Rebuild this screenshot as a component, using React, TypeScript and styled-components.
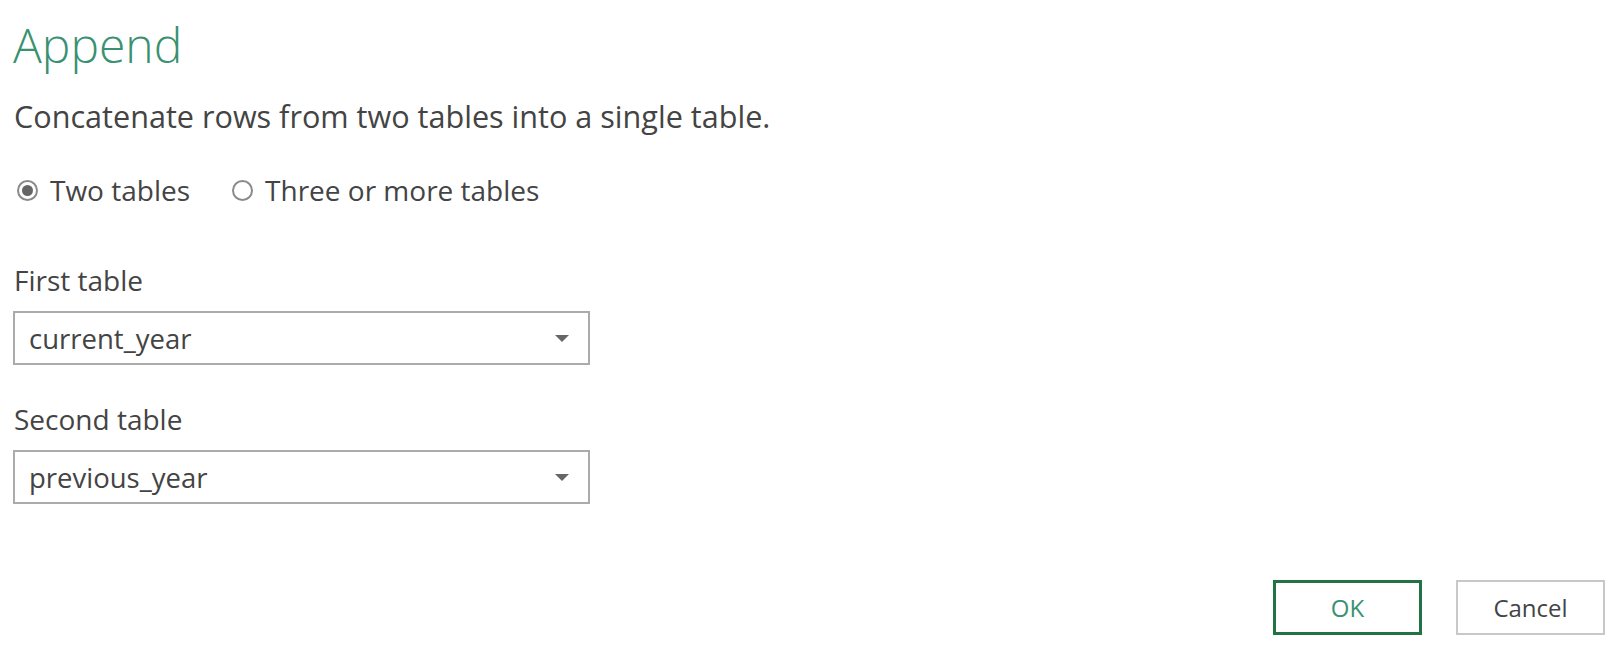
import React from "react";
import styled, { createGlobalStyle } from "styled-components";

const GlobalStyle = createGlobalStyle`
  body {
    margin: 0;
    background: #fff;
    font-family: "Open Sans", "Noto Sans", sans-serif;
    color: #444;
  }
`;

const tables = ["current_year", "previous_year"];

function App() {
  return (
    <Dialog>
      <GlobalStyle />
      <Title>Append</Title>
      <Description>Concatenate rows from two tables into a single table.</Description>

      <RadioRow>
        <RadioOption>
          <RadioDot checked />
          Two tables
        </RadioOption>
        <RadioOption>
          <RadioDot />
          Three or more tables
        </RadioOption>
      </RadioRow>

      <Field first>
        <Label>First table</Label>
        <Select>
          {tables[0]}
          <Arrow />
        </Select>
      </Field>
      <Field>
        <Label>Second table</Label>
        <Select>
          {tables[1]}
          <Arrow />
        </Select>
      </Field>

      <Footer>
        <Button primary>OK</Button>
        <Button>Cancel</Button>
      </Footer>
    </Dialog>
  );
}

export default App;

const Dialog = styled.div`
  width: 1616px;
  height: 647px;
  box-sizing: border-box;
  padding: 20px 11px 0 13px;
  display: flex;
  flex-direction: column;
`;
const Title = styled.h1`
  margin: 0;
  font-size: 48px;
  line-height: 50px;
  font-weight: 300;
  color: #3a9171;
`;
const Description = styled.p`
  margin: 30px 0 0 1px;
  font-size: 30.6px;
  line-height: 33px;
  color: #444;
`;
const RadioRow = styled.div`
  margin-top: 41px;
  display: flex;
  align-items: center;
  gap: 38px;
  height: 32px;
`;
const RadioOption = styled.label`
  display: flex;
  align-items: center;
  gap: 12px;
  font-size: 28px;
  color: #444;
`;
const RadioDot = styled.span<{ checked?: boolean }>`
  width: 21px;
  height: 21px;
  box-sizing: border-box;
  border: 2px solid #8a8a8a;
  border-radius: 50%;
  display: flex;
  align-items: center;
  justify-content: center;
  margin-left: 4px;
  &::after {
    content: "";
    width: 11px;
    height: 11px;
    border-radius: 50%;
    background: ${(p) => (p.checked ? "#666" : "transparent")};
  }
`;
const Field = styled.div<{ first?: boolean }>`
  margin-top: ${(p) => (p.first ? "58px" : "38px")};
  display: flex;
  flex-direction: column;
  gap: 14px;
`;
const Label = styled.div`
  font-size: 28px;
  line-height: 33px;
  margin-left: 1px;
`;
const Select = styled.div`
  width: 577px;
  height: 54px;
  box-sizing: border-box;
  border: 2px solid #ababab;
  display: flex;
  align-items: center;
  justify-content: space-between;
  padding: 0 19px 0 14px;
  font-size: 27.5px;
  color: #444;
`;
const Arrow = styled.span`
  width: 0;
  height: 0;
  border-left: 7px solid transparent;
  border-right: 7px solid transparent;
  border-top: 7px solid #666;
`;
const Footer = styled.div`
  margin-top: 76px;
  display: flex;
  justify-content: flex-end;
  gap: 34px;
`;
const Button = styled.button<{ primary?: boolean }>`
  width: 149px;
  height: 55px;
  background: #fff;
  border: ${(p) => (p.primary ? "3px solid #217346" : "2px solid #c8c8c8")};
  font-family: "Open Sans", "Noto Sans", sans-serif;
  font-size: 24px;
  color: ${(p) => (p.primary ? "#3a9171" : "#444")};
  padding: 0;
`;
